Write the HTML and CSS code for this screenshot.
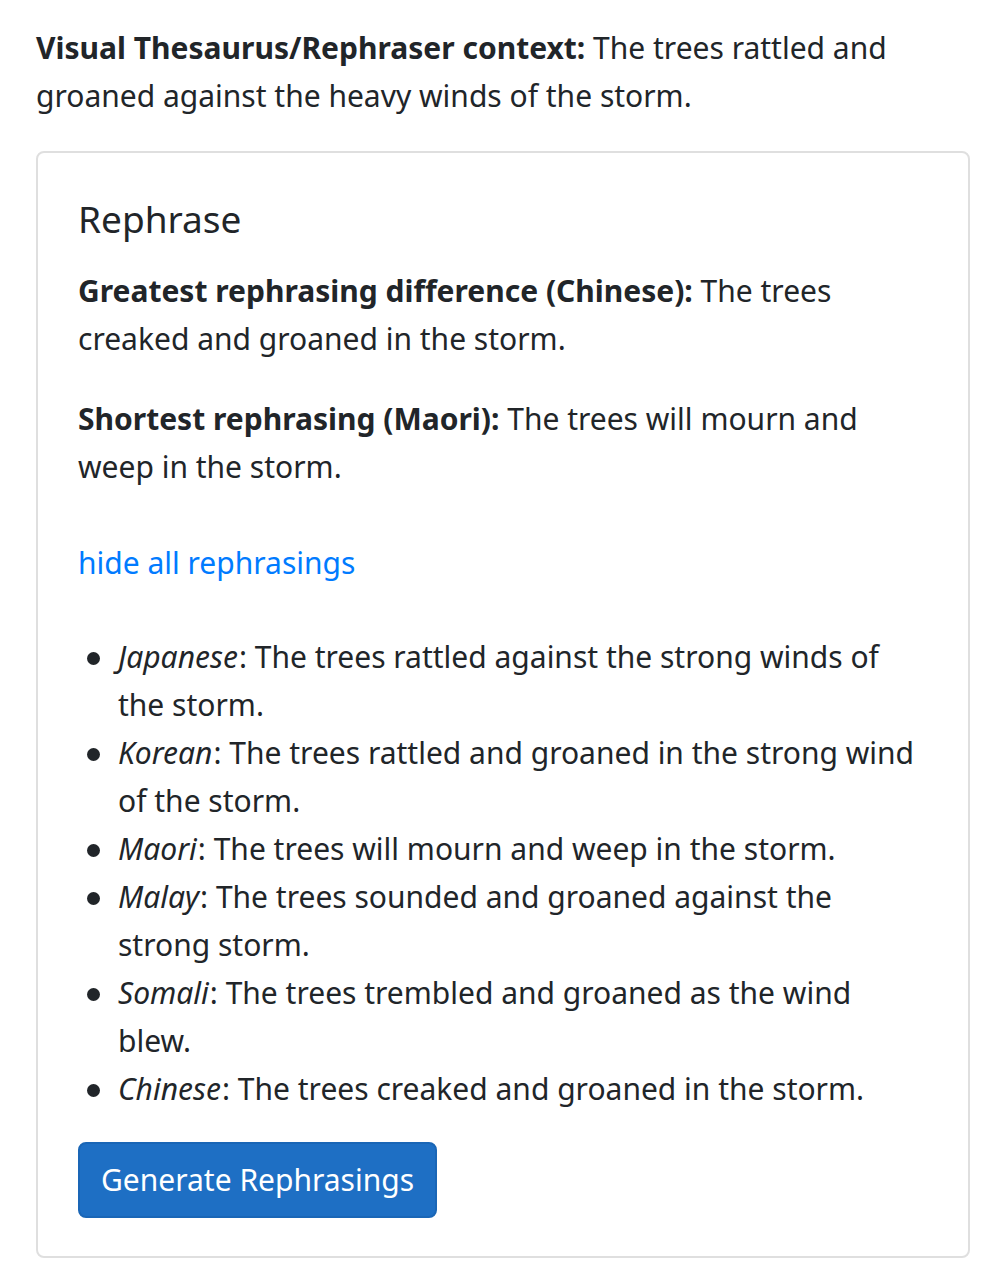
FILE: index.html
```html
<!DOCTYPE html>
<html lang="en">
<head>
<meta charset="utf-8">
<title>Rephrase</title>
<link rel="stylesheet" href="styles.css">
</head>
<body>
<div class="page">
  <p class="context"><strong>Visual Thesaurus/Rephraser context:</strong> The trees rattled and groaned against the heavy winds of the storm.</p>
  <div class="card">
    <h5 class="card-title">Rephrase</h5>
    <p class="summary"><strong>Greatest rephrasing difference (Chinese):</strong> The trees creaked and groaned in the storm.</p>
    <p class="summary"><strong>Shortest rephrasing (Maori):</strong> The trees will mourn and weep in the storm.</p>
    <div class="toggle"><a href="#" class="link">hide all rephrasings</a></div>
    <ul class="list">
      <li><em>Japanese</em>: The trees rattled against the strong winds of the storm.</li>
      <li><em>Korean</em>: The trees rattled and groaned in the strong wind of the storm.</li>
      <li><em>Maori</em>: The trees will mourn and weep in the storm.</li>
      <li><em>Malay</em>: The trees sounded and groaned against the strong storm.</li>
      <li><em>Somali</em>: The trees trembled and groaned as the wind blew.</li>
      <li><em>Chinese</em>: The trees creaked and groaned in the storm.</li>
    </ul>
    <button class="btn" type="button">Generate Rephrasings</button>
  </div>
</div>
</body>
</html>
```
FILE: styles.css
```css
html, body {
  margin: 0;
  padding: 0;
  background: #fff;
}
body {
  font-family: "Noto Sans", "Open Sans", sans-serif;
  font-size: 30px;
  line-height: 48px;
  color: #212529;
}
.page {
  padding: 23px 28px 30px 36px;
}
.context {
  margin: 0 0 31px 0;
  padding-top: 1px;
}
.context strong, .summary strong {
  font-weight: 700;
}
.card {
  border: 2px solid #dfdfdf;
  border-radius: 8px;
  padding: 42px 40px 38px 40px;
}
.card-title {
  margin: 0 0 24px 0;
  font-size: 37px;
  line-height: 48px;
  font-weight: 400;
}
.summary {
  margin: 0 0 32px 0;
}
.toggle {
  padding-top: 16px;
}
.link {
  color: #007bff;
  text-decoration: none;
}
.list {
  list-style: none;
  margin: 46px 0 29px 0;
  padding-left: 40px;
}
.list li {
  position: relative;
}
.list li::before {
  content: "";
  position: absolute;
  left: -31px;
  top: 19px;
  width: 13px;
  height: 13px;
  border-radius: 50%;
  background: #212529;
}
.list em {
  font-style: italic;
  padding-right: 1px;
}
.btn {
  font-family: inherit;
  font-size: 30px;
  line-height: 48px;
  color: #fff;
  background: #1e6fc4;
  border: 2px solid #1a66b6;
  border-radius: 8px;
  padding: 12px 21px;
  cursor: pointer;
}
```
